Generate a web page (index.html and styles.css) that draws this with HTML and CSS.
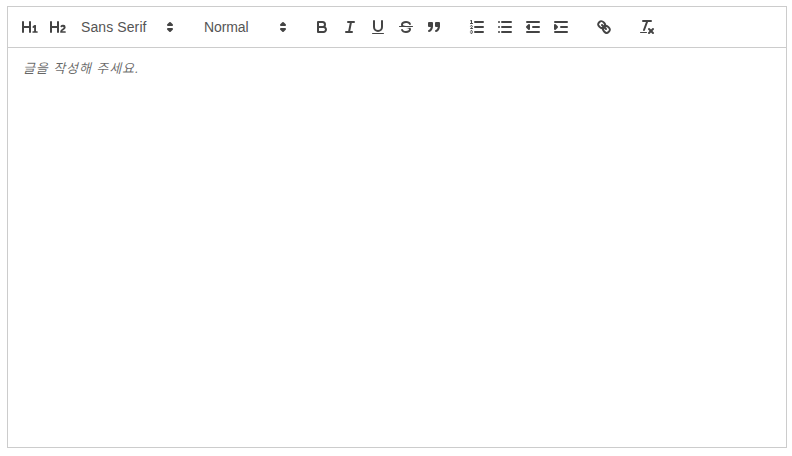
FILE: index.html
```html
<!DOCTYPE html>
<html lang="ko">
<head>
<meta charset="utf-8">
<title>Editor</title>
<link rel="stylesheet" href="styles.css">
</head>
<body>
<div class="editor-box">
  <div class="toolbar">
    <span class="group">
      <span class="btn"><svg viewBox="0 0 18 18"><path class="fill" d="M10,4V14a1,1,0,0,1-2,0V10H3v4a1,1,0,0,1-2,0V4A1,1,0,0,1,3,4V8H8V4a1,1,0,0,1,2,0Zm6.06787,9.209H14.98975V7.59863a.54085.54085,0,0,0-.605-.60547h-.62744a1.01119,1.01119,0,0,0-.748.29688L11.645,8.56641a.5435.5435,0,0,0-.022.8584l.28613.30762a.53861.53861,0,0,0,.84717.0332l.09912-.08789a1.2137,1.2137,0,0,0,.2417-.35254h.02246s-.01123.30859-.01123.60547V13.209H12.041a.54085.54085,0,0,0-.605.60547v.43945a.54085.54085,0,0,0,.605.60547h4.02686a.54085.54085,0,0,0,.605-.60547v-.43945A.54085.54085,0,0,0,16.06787,13.209Z"/></svg></span>
      <span class="btn"><svg viewBox="0 0 18 18"><path class="fill" d="M16.73975,13.81445v.43945a.54085.54085,0,0,1-.605.60547H11.855a.58392.58392,0,0,1-.64893-.60547V14.0127c0-2.90527,3.39941-3.42187,3.39941-4.55469a.77675.77675,0,0,0-.84717-.78125,1.17684,1.17684,0,0,0-.83594.38477c-.2749.26367-.561.374-.85791.13184l-.4292-.34082c-.30811-.24219-.38525-.51758-.1543-.81445a2.97155,2.97155,0,0,1,2.45361-1.17676,2.45393,2.45393,0,0,1,2.68408,2.40918c0,2.45312-3.1792,2.92676-3.27832,3.93848h2.79443A.54085.54085,0,0,1,16.73975,13.81445ZM9,3A.99974.99974,0,0,0,8,4V8H3V4A1,1,0,0,0,1,4V14a1,1,0,0,0,2,0V10H8v4a1,1,0,0,0,2,0V4A.99974.99974,0,0,0,9,3Z"/></svg></span>
      <span class="picker picker-font"><span>Sans Serif</span><svg viewBox="0 0 18 18"><polygon class="fill stroke-both" points="7 11 9 13 11 11 7 11"/><polygon class="fill stroke-both" points="7 7 9 5 11 7 7 7"/></svg></span>
    </span>
    <span class="group">
      <span class="picker picker-size"><span>Normal</span><svg viewBox="0 0 18 18"><polygon class="fill stroke-both" points="7 11 9 13 11 11 7 11"/><polygon class="fill stroke-both" points="7 7 9 5 11 7 7 7"/></svg></span>
    </span>
    <span class="group">
      <span class="btn"><svg viewBox="0 0 18 18"><path class="stroke" d="M5,4H9.5A2.5,2.5,0,0,1,12,6.5v0A2.5,2.5,0,0,1,9.5,9H5A0,0,0,0,1,5,9V4A0,0,0,0,1,5,4Z"/><path class="stroke" d="M5,9h5.5A2.5,2.5,0,0,1,13,11.5v0A2.5,2.5,0,0,1,10.5,14H5a0,0,0,0,1,0,0V9A0,0,0,0,1,5,9Z"/></svg></span>
      <span class="btn"><svg viewBox="0 0 18 18"><line class="stroke" x1="7" x2="13" y1="4" y2="4"/><line class="stroke" x1="5" x2="11" y1="14" y2="14"/><line class="stroke" x1="8" x2="10" y1="14" y2="4"/></svg></span>
      <span class="btn"><svg viewBox="0 0 18 18"><path class="stroke" d="M5,3V9a4.012,4.012,0,0,0,4,4H9a4.012,4.012,0,0,0,4-4V3"/><rect class="fill" height="1" rx="0.5" ry="0.5" width="12" x="3" y="15"/></svg></span>
      <span class="btn"><svg viewBox="0 0 18 18"><line class="thin-stroke" x1="15.5" x2="2.5" y1="8.5" y2="8.5"/><path class="fill" d="M9.007,8C6.542,7.791,6,7.519,6,6.5,6,5.792,7.283,5,9,5c1.571,0,2.765.679,2.969,1.309a1,1,0,0,0,1.9-.617C13.356,4.106,11.354,3,9,3,6.2,3,4,4.538,4,6.5a3.2,3.2,0,0,0,.5,1.843Z"/><path class="fill" d="M8.984,10C11.457,10.208,12,10.479,12,11.5c0,.708-1.283,1.5-3,1.5-1.571,0-2.765-.679-2.969-1.309a1,1,0,1,0-1.9.617C4.644,13.894,6.646,15,9,15c2.8,0,5-1.538,5-3.5a3.2,3.2,0,0,0-.5-1.843Z"/></svg></span>
      <span class="btn"><svg viewBox="0 0 18 18"><rect class="fill stroke-both" height="3" width="3" x="4" y="5"/><rect class="fill stroke-both" height="3" width="3" x="11" y="5"/><path class="fill stroke-both even" d="M7,8c0,4.031-3,5-3,5"/><path class="fill stroke-both even" d="M14,8c0,4.031-3,5-3,5"/></svg></span>
    </span>
    <span class="group">
      <span class="btn"><svg viewBox="0 0 18 18"><line class="stroke" x1="7" x2="15" y1="4" y2="4"/><line class="stroke" x1="7" x2="15" y1="9" y2="9"/><line class="stroke" x1="7" x2="15" y1="14" y2="14"/><line class="thin-stroke" x1="2.5" x2="4.5" y1="5.5" y2="5.5"/><path class="fill" d="M3.5,6A0.5,0.5,0,0,1,3,5.5V3.085l-0.276.138A0.5,0.5,0,0,1,2.053,3c-0.124-.247-0.023-0.324.224-0.447l1-.5A0.5,0.5,0,0,1,4,2.5v3A0.5,0.5,0,0,1,3.5,6Z"/><path class="thin-stroke" d="M4.5,10.5h-2c0-.234,1.85-1.076,1.85-2.234A0.959,0.959,0,0,0,2.5,8.156"/><path class="thin-stroke" d="M2.5,14.846a0.959,0.959,0,0,0,1.85-.109A0.7,0.7,0,0,0,3.75,14a0.688,0.688,0,0,0,.6-0.736,0.959,0.959,0,0,0-1.85-.109"/></svg></span>
      <span class="btn"><svg viewBox="0 0 18 18"><line class="stroke" x1="6" x2="15" y1="4" y2="4"/><line class="stroke" x1="6" x2="15" y1="9" y2="9"/><line class="stroke" x1="6" x2="15" y1="14" y2="14"/><line class="stroke" x1="3" x2="3" y1="4" y2="4"/><line class="stroke" x1="3" x2="3" y1="9" y2="9"/><line class="stroke" x1="3" x2="3" y1="14" y2="14"/></svg></span>
      <span class="btn"><svg viewBox="0 0 18 18"><line class="stroke" x1="3" x2="15" y1="14" y2="14"/><line class="stroke" x1="3" x2="15" y1="4" y2="4"/><line class="stroke" x1="9" x2="15" y1="9" y2="9"/><polyline class="fill stroke-both" points="5 7 5 11 3 9 5 7"/></svg></span>
      <span class="btn"><svg viewBox="0 0 18 18"><line class="stroke" x1="3" x2="15" y1="14" y2="14"/><line class="stroke" x1="3" x2="15" y1="4" y2="4"/><line class="stroke" x1="9" x2="15" y1="9" y2="9"/><polyline class="fill stroke-both" points="3 7 3 11 5 9 3 7"/></svg></span>
    </span>
    <span class="group">
      <span class="btn"><svg viewBox="0 0 18 18"><line class="stroke" x1="7" x2="11" y1="7" y2="11"/><path class="stroke even" d="M8.9,4.577a3.476,3.476,0,0,1,.36,4.679A3.476,3.476,0,0,1,4.577,8.9C3.185,7.5,2.035,6.4,4.217,4.217S7.5,3.185,8.9,4.577Z"/><path class="stroke even" d="M13.423,9.1a3.476,3.476,0,0,0-4.679-.36,3.476,3.476,0,0,0,.36,4.679c1.392,1.392,2.5,2.542,4.679.36S14.815,10.5,13.423,9.1Z"/></svg></span>
    </span>
    <span class="group">
      <span class="btn"><svg viewBox="0 0 18 18"><line class="stroke" x1="5" x2="13" y1="3" y2="3"/><line class="stroke" x1="6" x2="9.35" y1="12" y2="3"/><line class="stroke" x1="11" x2="15" y1="11" y2="15"/><line class="stroke" x1="15" x2="11" y1="11" y2="15"/><rect class="fill" height="1" rx="0.5" ry="0.5" width="7" x="2" y="14"/></svg></span>
    </span>
  </div>
  <div class="content">
    <p class="placeholder">글을 작성해 주세요.</p>
  </div>
</div>
</body>
</html>
```

FILE: styles.css
```css
html, body {
  background: #fff;
}
body {
  margin: 6px 0 0 7px;
  font-family: "Liberation Sans", "Noto Sans CJK KR", sans-serif;
}
.editor-box {
  width: 780px;
  height: 442px;
  display: flex;
  flex-direction: column;
}
.toolbar {
  box-sizing: border-box;
  height: 42px;
  border: 1px solid #ccc;
  padding: 8px;
  display: flex;
}
.group {
  display: flex;
  margin-right: 15px;
}
.btn {
  box-sizing: border-box;
  width: 28px;
  height: 24px;
  padding: 3px 5px;
  display: block;
}
.btn svg {
  display: block;
  width: 18px;
  height: 18px;
}
.picker {
  box-sizing: border-box;
  height: 24px;
  padding: 0 1px 0 9px;
  display: flex;
  align-items: center;
  justify-content: space-between;
  font-size: 14px;
  font-weight: 400;
  color: #555;
}
.picker svg {
  width: 18px;
  height: 18px;
}
.picker-font {
  width: 108px;
  letter-spacing: 0.1px;
}
.picker-size {
  width: 98px;
  letter-spacing: -0.1px;
}
.stroke {
  fill: none;
  stroke: #444;
  stroke-width: 2;
  stroke-linecap: round;
  stroke-linejoin: round;
}
.thin-stroke {
  fill: none;
  stroke: #444;
  stroke-width: 1;
  stroke-linecap: round;
  stroke-linejoin: round;
}
.fill {
  fill: #444;
}
.stroke-both {
  stroke: #444;
  stroke-width: 2;
  stroke-linecap: round;
  stroke-linejoin: round;
}
.even {
  fill-rule: evenodd;
}
.content {
  box-sizing: border-box;
  flex: 1;
  border: 1px solid #ccc;
  border-top: 0;
  padding: 12px 15px;
}
.placeholder {
  margin: 0;
  font-size: 13px;
  line-height: 1.42;
  font-style: italic;
  letter-spacing: 0.9px;
  color: rgba(0, 0, 0, 0.6);
}
```
